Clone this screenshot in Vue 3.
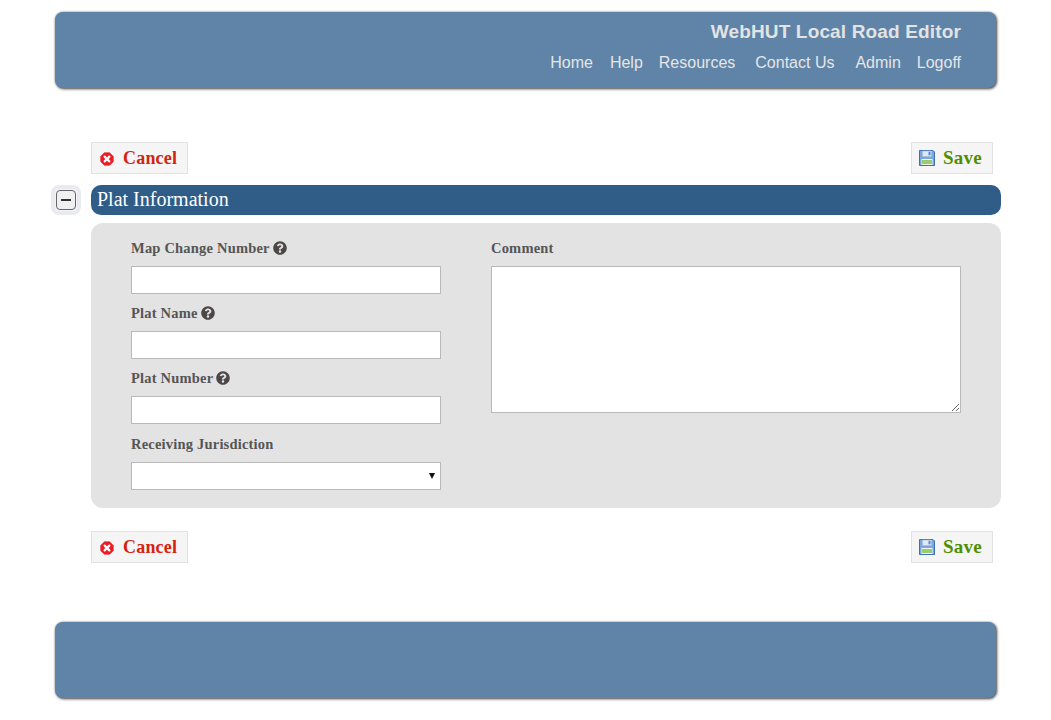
<script setup>
const nav = [
  { label: 'Home', gap: 17 },
  { label: 'Help', gap: 16 },
  { label: 'Resources', gap: 20 },
  { label: 'Contact Us', gap: 21 },
  { label: 'Admin', gap: 16 },
  { label: 'Logoff', gap: 0 }
]
const helpPath = 'M504 256c0 136.997-111.043 248-248 248S8 392.997 8 256C8 119.083 119.043 8 256 8s248 111.083 248 248zM262.655 90c-54.497 0-89.255 22.957-116.549 63.758-3.536 5.286-2.353 12.415 2.715 16.258l34.699 26.31c5.205 3.947 12.621 3.008 16.665-2.122 17.864-22.658 30.113-35.797 57.303-35.797 20.429 0 45.698 13.148 45.698 32.958 0 14.976-12.363 22.667-32.534 33.976C247.128 238.528 216 254.941 216 296v4c0 6.627 5.373 12 12 12h56c6.627 0 12-5.373 12-12v-1.333c0-28.462 83.186-29.647 83.186-106.667 0-58.002-60.165-102-116.531-102zM256 338c-25.365 0-46 20.635-46 46 0 25.364 20.635 46 46 46s46-20.636 46-46c0-25.365-20.635-46-46-46z'
const fields = [
  { label: 'Map Change Number', help: true },
  { label: 'Plat Name', help: true },
  { label: 'Plat Number', help: true }
]
const bars = ['top', 'bottom']
</script>

<template>
  <div class="page">
    <header class="banner head">
      <div class="title">WebHUT Local Road Editor</div>
      <nav class="nav">
        <a v-for="n in nav" :key="n.label" :style="{ marginRight: n.gap + 'px' }">{{ n.label }}</a>
      </nav>
    </header>

    <main class="main">
      <template v-for="b in bars" :key="b">
        <div class="toolbar" :class="b">
          <button class="btn cancel" type="button">
            <svg width="14" height="14" viewBox="0 0 16 16">
              <path d="M5 .8h6L15.200 5v6L11 15.200H5L.8 11V5z" fill="#ee1c25" stroke="#d8141c" stroke-width=".6"/>
              <path d="M5.300 5.300l5.400 5.400M10.700 5.300l-5.400 5.400" stroke="#fff" stroke-width="2.500" stroke-linecap="round"/>
            </svg>
            <span>Cancel</span>
          </button>
          <button class="btn save" type="button">
            <svg width="16" height="16" viewBox="0 0 16 16">
              <path d="M.5.5h13.500l1.500 1.500v13.500H.5z" fill="#7ea6de" stroke="#3f6fb5"/>
              <rect x="3.500" y="1" width="9" height="5.500" fill="#dfe9f7" stroke="#9db8de" stroke-width=".5"/>
              <rect x="9.500" y="1.800" width="2" height="3.500" fill="#5b86c4"/>
              <rect x="2.500" y="9" width="11" height="6" fill="#f2f6e8"/>
              <path d="M3 11h10M3 13h10" stroke="#7cc04b" stroke-width="1.500"/>
            </svg>
            <span>Save</span>
          </button>
        </div>

        <section v-if="b === 'top'" class="section">
          <div class="section-bar">
            <button class="toggle" type="button" aria-label="Collapse"><i></i></button>
            <h2>Plat Information</h2>
          </div>
          <div class="panel">
            <div class="col">
              <div v-for="f in fields" :key="f.label" class="field">
                <label>{{ f.label }}
                  <svg class="help" width="14" height="14" viewBox="0 0 512 512"><path :d="helpPath" fill="#4d4646"/></svg>
                </label>
                <input type="text" />
              </div>
              <div class="field last">
                <label>Receiving Jurisdiction</label>
                <div class="select"><span class="arrow"></span></div>
              </div>
            </div>
            <div class="col">
              <div class="field">
                <label>Comment</label>
                <textarea></textarea>
              </div>
            </div>
          </div>
        </section>
      </template>
    </main>

    <footer class="banner foot"></footer>
  </div>
</template>

<style scoped>
.page {
  width: 1051px;
  height: 720px;
  overflow: hidden;
  background: #fff;
  font-family: "Liberation Serif", serif;
}
.banner {
  width: 941px;
  height: 76px;
  margin-left: 55px;
  box-sizing: border-box;
  background: #5f84a8;
  border-radius: 8px;
  box-shadow: 1px 1px 3px rgba(0, 0, 0, .7), 0 0 2px rgba(0, 0, 0, .35);
}
.head {
  margin-top: 12px;
  padding: 10px 35px 0 0;
  text-align: right;
  font-family: "Liberation Sans", sans-serif;
  color: #e3e3e3;
}
.title {
  font-size: 19px;
  font-weight: 700;
  letter-spacing: .15px;
  line-height: 20px;
}
.nav {
  display: flex;
  justify-content: flex-end;
  margin-top: 11px;
  font-size: 16px;
  line-height: 20px;
  color: #e6e6e6;
}
.main {
  padding: 54px 50px 0 91px;
  width: 910px;
}
.toolbar {
  display: flex;
  justify-content: space-between;
  padding-right: 8px;
  height: 32px;
}
.toolbar.bottom {
  margin-top: 23px;
}
.btn {
  display: flex;
  align-items: center;
  height: 32px;
  padding: 0 0 0 8px;
  box-sizing: border-box;
  background: #f5f5f5;
  border: 1px solid #e2e2e2;
  font-family: "Liberation Serif", serif;
  font-size: 18px;
  font-weight: 700;
}
.btn span {
  margin-left: 9px;
}
.cancel { width: 97px; color: #d3240f; }
.cancel span { letter-spacing: .2px; }
.cancel svg { margin-top: 2px; }
.save { width: 82px; color: #4e8f00; padding-left: 7px; }
.save span { margin-left: 8px; font-size: 19px; letter-spacing: .2px; }
.section {
  margin-top: 11px;
}
.section-bar {
  position: relative;
  height: 30px;
  background: #2f5d87;
  border-radius: 10px;
  padding-left: 6px;
}
.section-bar h2 {
  margin: 0;
  color: #fff;
  font-size: 20px;
  font-weight: 400;
  line-height: 28px;
}
.toggle {
  position: absolute;
  left: -40px;
  top: 0;
  width: 30px;
  height: 30px;
  padding: 0;
  background: #f3f4f6;
  border: 4px solid #e9ebee;
  border-radius: 8px;
  display: flex;
  align-items: center;
  justify-content: center;
}
.toggle i {
  position: relative;
  display: block;
  width: 20px;
  height: 20px;
  flex: none;
  box-sizing: border-box;
  border: 1px solid #666;
  border-radius: 4px;
  background: #f0f0f0;
}
.toggle i::after {
  content: "";
  position: absolute;
  left: 4px;
  right: 4px;
  top: 8px;
  height: 2px;
  background: #333;
}
.panel {
  margin-top: 8px;
  height: 285px;
  box-sizing: border-box;
  padding: 7px 40px 0;
  background: #e3e3e3;
  border-radius: 12px;
  display: grid;
  grid-template-columns: 310px 470px;
  column-gap: 50px;
  align-content: start;
}
.field label {
  display: flex;
  align-items: center;
  gap: 3px;
  height: 36px;
  box-sizing: border-box;
  font-size: 14.500px;
  letter-spacing: .2px;
  font-weight: 700;
  color: #555;
}
.field + .field label {
  height: 37px;
  padding-top: 1px;
}
.field.last label {
  height: 38px;
  padding-top: 2px;
}
input, .select, textarea {
  display: block;
  box-sizing: border-box;
  width: 100%;
  margin: 0;
  background: #fff;
  border: 1px solid #b9b9b9;
  border-radius: 0;
  height: 28px;
}
textarea {
  height: 147px;
  resize: both;
  width: 470px;
}
.select {
  position: relative;
}
.arrow {
  position: absolute;
  right: 5px;
  top: 10px;
  width: 0;
  height: 0;
  border-left: 3px solid transparent;
  border-right: 3px solid transparent;
  border-top: 6px solid #111;
}
.foot {
  margin-top: 59px;
}
</style>
